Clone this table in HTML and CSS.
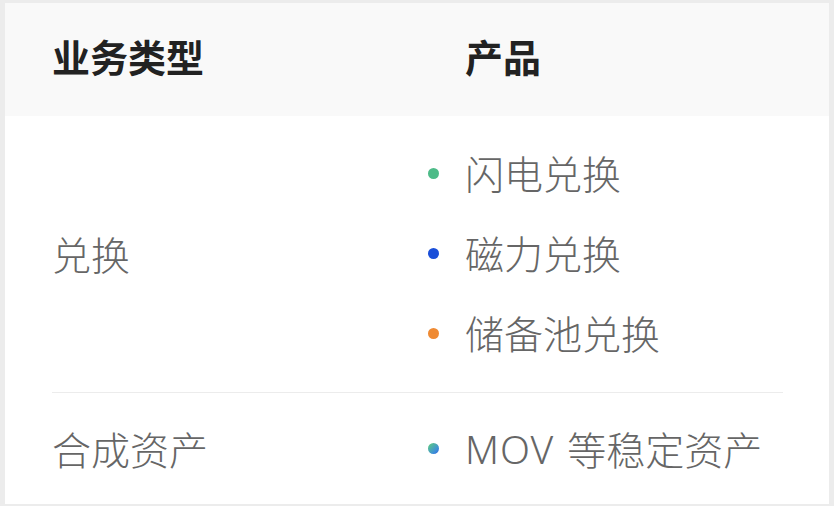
FILE: index.html
```html
<!DOCTYPE html>
<html lang="zh-CN">
<head>
<meta charset="utf-8">
<link rel="stylesheet" href="styles.css">
</head>
<body>
<div class="frame">
  <div class="head">
    <div class="col1">业务类型</div>
    <div class="col2 head-prod">产品</div>
  </div>
  <div class="row row-first">
    <div class="col1">兑换</div>
    <ul class="col2 list">
      <li><span class="dot green"></span>闪电兑换</li>
      <li><span class="dot blue"></span>磁力兑换</li>
      <li><span class="dot orange"></span>储备池兑换</li>
    </ul>
  </div>
  <div class="row row-last">
    <div class="col1">合成资产</div>
    <ul class="col2 list">
      <li><span class="dot grad"></span><span class="latin">MOV</span>等稳定资产</li>
    </ul>
  </div>
</div>
</body>
</html>
```
FILE: styles.css
```css
html, body {
  margin: 0;
  padding: 0;
  background: #ffffff;
}
body {
  font-family: "Noto Sans CJK SC", "Noto Sans", sans-serif;
  width: 834px;
  height: 506px;
  overflow: hidden;
}
.frame {
  box-sizing: border-box;
  width: 834px;
  height: 506px;
  border-style: solid;
  border-color: #ececec;
  border-width: 3px 5px 2px 5px;
  display: flex;
  flex-direction: column;
}
.head {
  box-sizing: border-box;
  height: 113px;
  background: #f9f9f9;
  display: flex;
  align-items: center;
  padding: 0 47px 8px 47px;
  font-weight: 700;
  font-size: 38px;
  line-height: 1;
  color: #222222;
}
.col1 {
  width: 376px;
  flex: none;
}
.head-prod {
  padding-left: 37px;
}
.row {
  display: flex;
  align-items: center;
  margin: 0 46px 0 47px;
  font-family: "Noto Sans CJK SC", sans-serif;
  font-size: 39px;
  font-weight: 300;
  line-height: 1;
  color: #666666;
}
.row .col1 {
  padding-bottom: 2px;
}
.row-first {
  height: 276px;
  border-bottom: 1px solid #ececec;
}
.row-last {
  flex: 1;
}
.row-last .col1 {
  padding-bottom: 0;
}
.list {
  list-style: none;
  margin: 0;
  padding: 0;
}
.list li {
  box-sizing: border-box;
  height: 80px;
  display: flex;
  align-items: center;
  padding-bottom: 3px;
}
.row-last .list li {
  padding-bottom: 0;
}
.latin {
  font-family: "Noto Sans", "Liberation Sans", sans-serif;
  font-weight: 300;
  letter-spacing: 1px;
  margin-right: 13px;
}
.dot {
  width: 11px;
  height: 11px;
  border-radius: 50%;
  margin-right: 26px;
  margin-top: 2px;
  flex: none;
}
.row-last .dot {
  margin-top: 0;
}
.green { background: #4dbb88; }
.blue { background: #1a4fd9; }
.orange { background: #ef8a33; }
.grad { background: linear-gradient(135deg, #5fd07a 0%, #3d8fd8 70%, #2a5fd8 100%); }
```
